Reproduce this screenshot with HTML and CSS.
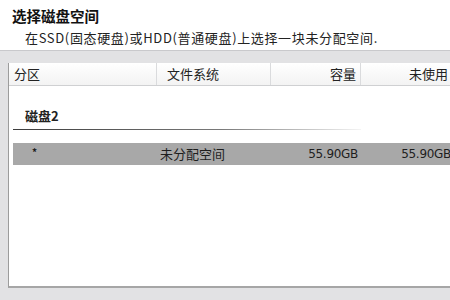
FILE: index.html
```html
<!DOCTYPE html>
<html lang="zh-CN">
<head>
<meta charset="utf-8">
<link rel="stylesheet" href="styles.css">
</head>
<body>
<div class="head">
  <div class="title">选择磁盘空间</div>
  <div class="sub">在SSD(固态硬盘)或HDD(普通硬盘)上选择一块未分配空间.</div>
</div>
<div class="frame">
  <div class="list">
    <div class="cols">
      <div class="col c1">分区</div>
      <div class="col c2">文件系统</div>
      <div class="col c3">容量</div>
      <div class="col c4">未使用</div>
    </div>
    <div class="body">
      <div class="group">磁盘2</div>
      <div class="row">
        <div class="cell star">*</div>
        <div class="cell name">未分配空间</div>
        <div class="cell num">55.90GB</div>
        <div class="cell num last">55.90GB</div>
      </div>
    </div>
  </div>
</div>
</body>
</html>
```
FILE: styles.css
```css
html, body {
  margin: 0;
  padding: 0;
}
body {
  width: 450px;
  height: 300px;
  overflow: hidden;
  background: #ffffff;
  font-family: "Noto Sans CJK SC", "Liberation Sans", sans-serif;
  color: #1a1a1a;
}
.head {
  height: 50px;
  box-sizing: border-box;
  padding: 7px 0 0 12px;
}
.title {
  font-size: 14.5px;
  font-weight: bold;
  line-height: 18px;
  color: #111;
}
.sub {
  font-size: 13px;
  line-height: 17px;
  padding-left: 13px;
  margin-top: 4px;
  letter-spacing: 0.65px;
  color: #222;
}
.frame {
  height: 250px;
  box-sizing: border-box;
  background: #e2e2e4;
  border-top: 1px solid #c9c9cc;
  padding: 12px 0 12px 8px;
}
.list {
  height: 225px;
  width: 460px;
  box-sizing: border-box;
  background: #ffffff;
  border-left: 1px solid #9c9c9c;
  border-bottom: 2px solid #a6a6a6;
  display: flex;
  flex-direction: column;
}
.cols {
  height: 22px;
  display: grid;
  grid-template-columns: 148px 114px 90px 100px;
  background: linear-gradient(#ffffff, #f3f3f3);
  border-bottom: 1px solid #cfd0d2;
  font-size: 13px;
  line-height: 22px;
  color: #222;
}
.col {
  border-right: 1px solid #dadbdd;
  white-space: nowrap;
}
.c1 { padding-left: 5px; }
.c2 { padding-left: 10px; }
.c3 { text-align: right; padding-right: 4px; }
.c4 { text-align: right; padding-right: 13px; border-right: none; }
.body {
  padding: 0 0 0 4px;
}
.group {
  margin-top: 22px;
  margin-left: 12px;
  font-size: 13px;
  font-weight: bold;
  line-height: 16px;
  color: #222;
}
.group::after {
  content: "";
  display: block;
  margin-left: -12px;
  margin-top: 5px;
  width: 348px;
  height: 1px;
  background: linear-gradient(90deg, #3c3c3c, #7a7a7a 60%, rgba(200,200,200,0.2));
}
.row {
  margin-top: 13px;
  height: 22px;
  background: #a8a8a8;
  display: grid;
  grid-template-columns: 144px 114px 90px 100px;
  font-size: 13px;
  line-height: 22px;
  color: #1e1e1e;
}
.cell { white-space: nowrap; }
.star {
  padding-left: 19px;
  font-size: 10px;
  line-height: 18px;
  font-weight: bold;
}
.name { padding-left: 3px; }
.num {
  text-align: right;
  padding-right: 3px;
  font-size: 12px;
  font-family: "DejaVu Sans", sans-serif;
  letter-spacing: -0.3px;
}
.last { padding-right: 10px; }
```
